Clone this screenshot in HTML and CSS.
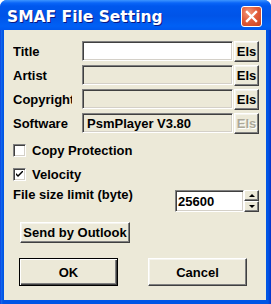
FILE: index.html
```html
<!DOCTYPE html>
<html lang="en">
<head>
  <meta charset="UTF-8" />
  <title>SMAF File Setting</title>
  <link rel="stylesheet" href="styles.css">
</head>
<body>
  <div class="window">
    <div class="titlebar">
      <span class="title">SMAF File Setting</span>
      <span class="close">
        <svg width="19" height="19" viewBox="0 0 19 19">
          <path d="M5 5 L14 14 M14 5 L5 14" stroke="#fff" stroke-width="2.4" stroke-linecap="square" fill="none"/>
        </svg>
      </span>
    </div>

    <div class="client">
      <div class="fields">
        <div class="field-row">
          <span class="label">Title</span>
          <div class="edit white"></div>
          <button class="btn els">Els</button>
        </div>
        <div class="field-row">
          <span class="label">Artist</span>
          <div class="edit"></div>
          <button class="btn els">Els</button>
        </div>
        <div class="field-row">
          <span class="label">Copyright</span>
          <div class="edit"></div>
          <button class="btn els">Els</button>
        </div>
        <div class="field-row">
          <span class="label">Software</span>
          <div class="edit">PsmPlayer V3.80</div>
          <button class="btn els disabled">Els</button>
        </div>
      </div>

      <div class="checks">
        <div class="check-row">
          <span class="checkbox"></span>
          <span>Copy Protection</span>
        </div>
        <div class="check-row">
          <span class="checkbox">
            <svg width="7" height="7" viewBox="0 0 7 7">
              <path d="M0 2 L0 4 L2 6 L7 1 L7 -1 L2 4 Z" fill="#000"/>
            </svg>
          </span>
          <span>Velocity</span>
        </div>
      </div>

      <div class="size-row">
        <span class="size-label">File size limit (byte)</span>
        <div class="spin">
          <div class="edit white">25600</div>
          <div class="arrows">
            <span class="arrow"><span class="tri up"></span></span>
            <span class="arrow"><span class="tri down"></span></span>
          </div>
        </div>
      </div>

      <button class="btn outlook">Send by Outlook</button>

      <div class="actions">
        <button class="btn big default">OK</button>
        <button class="btn big">Cancel</button>
      </div>
    </div>
  </div>
</body>
</html>
```

FILE: styles.css
```css
* {
  box-sizing: border-box;
  padding: 0;
  margin: 0;
}

body {
  width: 271px;
  height: 304px;
  background: #fff;
  font-family: 'Liberation Sans', Arial, sans-serif;
  font-weight: bold;
  font-size: 13px;
  color: #000;
}

.window {
  width: 271px;
  height: 304px;
  display: flex;
  flex-direction: column;
  background: linear-gradient(to right, #0831d9 0, #166aee 1px, #0055e5 3px, #0055e5 calc(100% - 3px), #0731c9 100%);
  border-radius: 7px 7px 0 0;
  overflow: hidden;
}

.titlebar {
  height: 30px;
  flex-shrink: 0;
  display: flex;
  align-items: center;
  justify-content: space-between;
  padding: 3px 9px 0 7px;
  background: linear-gradient(to bottom, #3d95ff 0, #0a65f8 3px, #0058ee 6px, #0054e8 16px, #0060f5 26px, #0058ee 30px);
}

.title {
  font-family: 'DejaVu Sans', sans-serif;
  font-size: 15.5px;
  color: #fff;
  text-shadow: 1px 1px #0a1883;
  white-space: nowrap;
}

.close {
  width: 21px;
  height: 21px;
  display: flex;
  align-items: center;
  justify-content: center;
  border: 1px solid #fff;
  border-radius: 3px;
  background: radial-gradient(circle at 35% 30%, #f29a7c 0, #e35d3b 45%, #c7411f 100%);
}

.client {
  flex: 1;
  margin: 0 5px 4px 4px;
  background: #ece9d8;
  padding: 11px 7px 0 9px;
  display: flex;
  flex-direction: column;
}

.fields {
  display: flex;
  flex-direction: column;
  gap: 4px;
}

.field-row {
  display: flex;
  align-items: center;
  height: 20px;
}

.label {
  width: 59px;
  margin-right: 10px;
  overflow: hidden;
  white-space: nowrap;
}

.edit {
  width: 151px;
  height: 20px;
  padding: 2px 0 0 4px;
  background: #ece9d8;
  border: 1px solid;
  border-color: #808080 #fff #fff #808080;
  box-shadow: inset 1px 1px #404040, inset -1px -1px #d4d0c8;
  white-space: nowrap;
  line-height: 15px;
}

.edit.white {
  background: #fff;
}

.btn {
  font-family: 'Liberation Sans', Arial, sans-serif;
  font-weight: bold;
  font-size: 13px;
  color: #000;
  background: #ece9d8;
  border: 1px solid;
  border-color: #fff #404040 #404040 #fff;
  box-shadow: inset -1px -1px #808080, inset 1px 1px #f5f4ee;
  display: flex;
  align-items: center;
  justify-content: center;
}

.els {
  width: 25px;
  height: 21px;
  margin-left: 1px;
}

.els.disabled {
  color: #aca899;
  text-shadow: 1px 1px #fff;
}

.checks {
  display: flex;
  flex-direction: column;
  gap: 11px;
  margin-top: 11px;
}

.check-row {
  display: flex;
  align-items: center;
  height: 13px;
  gap: 6px;
}

.checkbox {
  width: 13px;
  height: 13px;
  display: flex;
  align-items: center;
  justify-content: center;
  background: #fff;
  border: 1px solid;
  border-color: #808080 #fff #fff #808080;
  box-shadow: inset 1px 1px #404040, inset -1px -1px #d4d0c8;
}

.size-row {
  display: flex;
  justify-content: space-between;
  align-items: flex-start;
  margin-top: 3px;
}

.size-label {
  line-height: 15px;
  margin-top: 3px;
  white-space: nowrap;
}

.spin {
  display: flex;
  margin-top: 6px;
}

.spin .edit {
  width: 69px;
  height: 22px;
  padding: 3px 0 0 2px;
}

.arrows {
  display: flex;
  flex-direction: column;
}

.arrow {
  width: 15px;
  height: 11px;
  display: flex;
  align-items: center;
  justify-content: center;
  background: #ece9d8;
  border: 1px solid;
  border-color: #fff #404040 #404040 #fff;
  box-shadow: inset -1px -1px #808080;
}

.tri {
  width: 0;
  height: 0;
  border-left: 3px solid transparent;
  border-right: 3px solid transparent;
}

.tri.up {
  border-bottom: 3px solid #000;
}

.tri.down {
  border-top: 3px solid #000;
}

.outlook {
  width: 110px;
  height: 21px;
  margin: 10px 0 0 7px;
}

.actions {
  display: flex;
  margin-top: 15px;
  padding-left: 6px;
  gap: 30px;
}

.big {
  width: 99px;
  height: 28px;
}

.default {
  border: 1px solid #000;
  box-shadow: inset 1px 1px #fff, inset -1px -1px #404040, inset -2px -2px #808080;
}
```
